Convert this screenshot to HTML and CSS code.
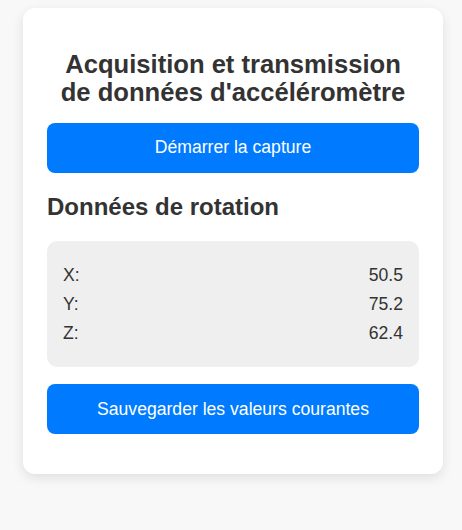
FILE: index.html
```html
<!DOCTYPE html>
<html lang="fr">
<head>
<meta charset="utf-8">
<title>Accéléromètre</title>
<link rel="stylesheet" href="styles.css">
</head>
<body>
<div class="card">
  <h1 class="title">Acquisition et transmission de données d'accéléromètre</h1>
  <button class="btn btn-start">Démarrer la capture</button>
  <h2 class="subtitle">Données de rotation</h2>
  <div class="data">
    <div class="row"><span>X:</span><span>50.5</span></div>
    <div class="row"><span>Y:</span><span>75.2</span></div>
    <div class="row"><span>Z:</span><span>62.4</span></div>
  </div>
  <button class="btn btn-save">Sauvegarder les valeurs courantes</button>
</div>
</body>
</html>
```

FILE: styles.css
```css
html {
  background: #f8f8f8;
}
body {
  margin: 0;
  padding: 8px 0 40px;
  font-family: "Liberation Sans", Arial, sans-serif;
  color: #333;
}
.card {
  box-sizing: border-box;
  width: 420px;
  margin-left: 23px;
  background: #fff;
  border-radius: 12px;
  box-shadow: 0 4px 12px rgba(0, 0, 0, 0.1);
  padding: 24px 24px 40px;
  display: flex;
  flex-direction: column;
}
.title {
  font-size: 25.6px;
  line-height: 1.1;
  font-weight: bold;
  text-align: center;
  margin: 17.5px 0 17px;
}
.btn {
  display: block;
  width: 100%;
  height: 50px;
  border: none;
  border-radius: 8px;
  background: #007bff;
  color: #fff;
  font-family: "Liberation Sans", Arial, sans-serif;
  font-size: 17.6px;
  padding: 0;
}
.subtitle {
  font-size: 24px;
  line-height: 1.15;
  font-weight: bold;
  margin: 20px 0 21px;
}
.data {
  background: #efefef;
  border-radius: 10px;
  padding: 20px 16px 19px;
  font-size: 17.6px;
  line-height: 29px;
}
.row {
  display: flex;
  justify-content: space-between;
}
.btn-save {
  margin-top: 17px;
}
```
